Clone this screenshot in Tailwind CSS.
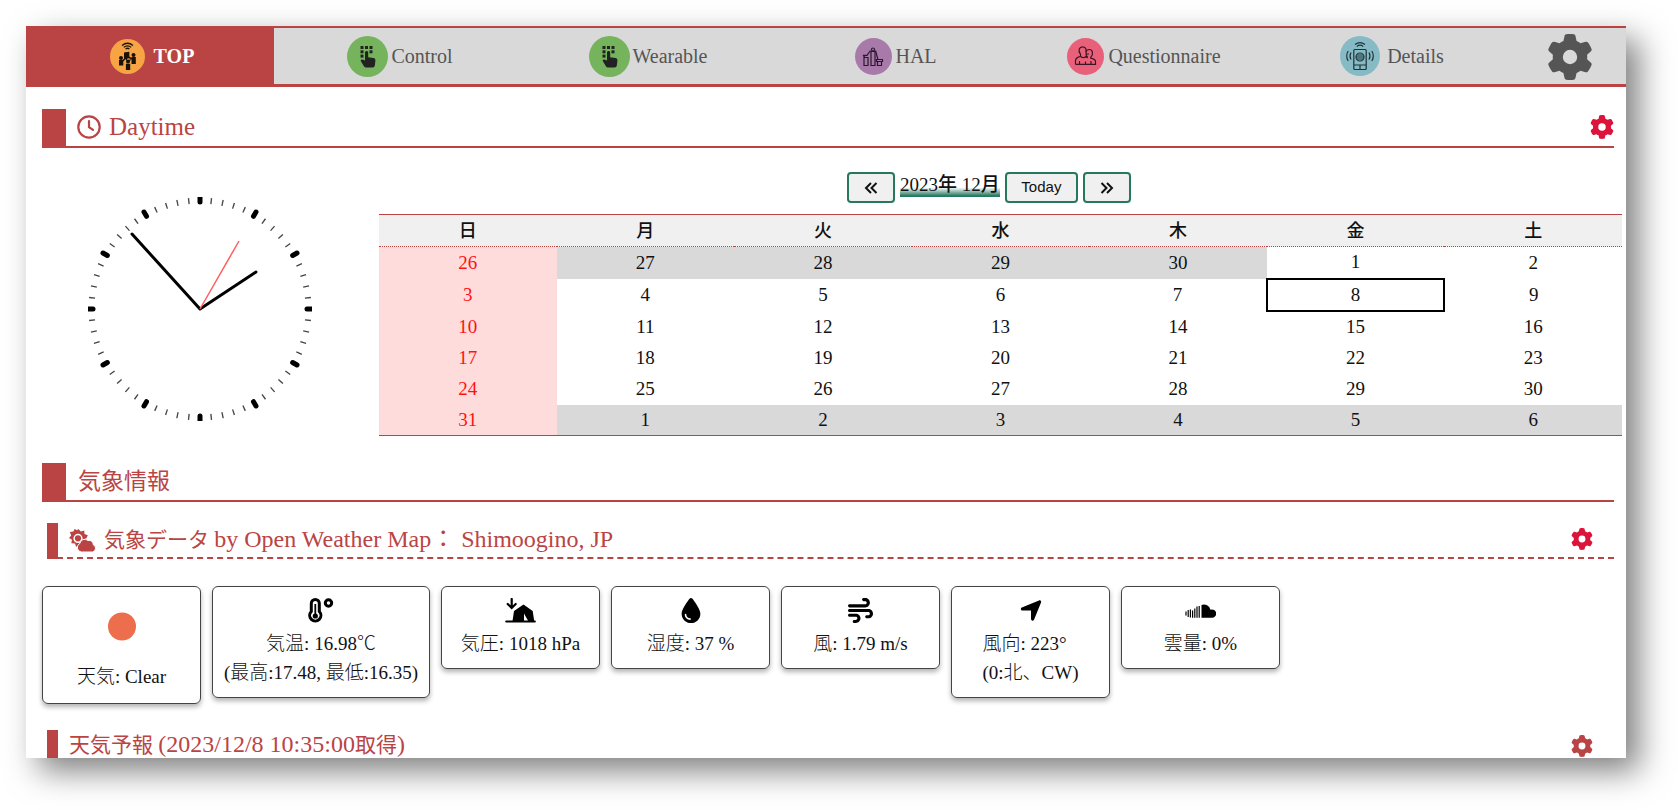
<!DOCTYPE html>
<html lang="ja">
<head>
<meta charset="utf-8">
<meta name="viewport" content="width=device-width, initial-scale=1">
<title>TOP</title>
<script src="https://cdn.jsdelivr.net/npm/@tailwindcss/browser@4"></script>
</head>
<body class="bg-white h-screen overflow-hidden flex pt-[26px] pl-[26px] pr-[52px] pb-[52px] font-['Liberation_Serif','Noto_Sans_CJK_JP',serif] font-light text-[19px] text-[#111]">

<svg class="hidden" aria-hidden="true">
  <symbol id="gear" viewBox="0 0 512 512"><path d="M495.9 166.6c3.2 8.7 .5 18.4-6.4 24.6l-43.3 39.4c1.1 8.3 1.7 16.8 1.7 25.4s-.6 17.1-1.7 25.4l43.3 39.4c6.9 6.2 9.6 15.9 6.4 24.6c-4.4 11.9-9.7 23.3-15.8 34.3l-4.7 8.1c-6.6 11-14 21.4-22.1 31.2c-5.9 7.2-15.7 9.6-24.5 6.8l-55.7-17.7c-13.4 10.3-28.2 18.9-44 25.4l-12.5 57.1c-2 9.1-9 16.3-18.2 17.8c-13.8 2.3-28 3.5-42.5 3.5s-28.7-1.2-42.5-3.5c-9.2-1.5-16.2-8.7-18.2-17.8l-12.5-57.1c-15.8-6.5-30.6-15.1-44-25.4L83.1 425.9c-8.8 2.8-18.6 .3-24.5-6.8c-8.1-9.8-15.5-20.2-22.1-31.2l-4.7-8.1c-6.1-11-11.4-22.4-15.8-34.3c-3.2-8.7-.5-18.4 6.400-24.600l43.300-39.400C64.600 273.100 64 264.600 64 256s.6-17.100 1.700-25.400L22.400 191.200c-6.900-6.200-9.600-15.900-6.400-24.600c4.400-11.900 9.700-23.300 15.800-34.300l4.700-8.100c6.600-11 14-21.400 22.100-31.200c5.900-7.200 15.700-9.600 24.500-6.800l55.700 17.700c13.400-10.300 28.200-18.900 44-25.400l12.500-57.100c2-9.100 9-16.300 18.200-17.800C227.300 1.200 241.500 0 256 0s28.700 1.200 42.500 3.500c9.200 1.500 16.200 8.700 18.200 17.800l12.500 57.100c15.800 6.500 30.600 15.100 44 25.400l55.700-17.700c8.800-2.800 18.600-.3 24.500 6.800c8.100 9.800 15.500 20.200 22.100 31.200l4.700 8.100c6.100 11 11.400 22.400 15.800 34.300zM256 336a80 80 0 1 0 0-160 80 80 0 1 0 0 160z"/></symbol>
  <symbol id="keypad" viewBox="0 0 41 41">
    <circle cx="20.500" cy="20.500" r="20.500" fill="#75b45c"/>
    <g fill="#222"><rect x="13.500" y="10" width="3" height="3"/><rect x="18" y="10" width="3" height="3"/><rect x="22.500" y="10" width="3" height="3"/><rect x="13.500" y="14.300" width="3" height="3"/><rect x="22.500" y="14.300" width="3" height="3"/><rect x="13.500" y="18.600" width="3" height="3"/>
    <path d="M18 16.500c0-2 3.200-2 3.200 0v4.700l5.200.9c1.500.3 2 1 2 2.400l-.5 4.500c-.2 1.700-1 2.500-2.500 2.500h-6c-1 0-1.800-.4-2.500-1.300l-3-5c-.6-1 .4-1.900 1.500-1.600l2.600 1z"/></g>
  </symbol>
  <symbol id="major" viewBox="0 0 224 224" overflow="visible"><path d="M112 0V5" stroke="#000" stroke-width="5" stroke-linecap="round"/></symbol>
</svg>

<div class="flex-1 min-w-0 overflow-hidden bg-white shadow-[13px_13px_30px_rgba(0,0,0,0.5)]">

  <nav class="flex h-[61px] border-t-2 border-b-3 border-[#ba4444] bg-[#d9d9d9] text-[20px] text-[#555]">
    <div class="grid flex-1 grid-cols-6">
      <a href="#top" class="flex items-center justify-center gap-[9px] bg-[#ba4444] pl-1 font-bold text-white">
        <svg class="size-[35px]" viewBox="0 0 35 35" aria-hidden="true">
          <circle cx="17.500" cy="17.500" r="17.500" fill="#f6a444"/>
          <g fill="none" stroke="#1a1208" stroke-width="1.300"><path d="M12 6.500q5.500-4.500 11 0M13.800 8.300q3.700-3 7.400 0M15.600 10q1.900-1.500 3.800 0"/></g>
          <g fill="#1a1208"><circle cx="11" cy="19" r="2"/><path d="M9 21h4.300v5.500H9z"/><circle cx="23.500" cy="16" r="2"/><path d="M21.500 18h4.300v7h-4.300z"/><circle cx="18" cy="22.500" r="2"/><path d="M15.900 24.800h4.300V31h-4.300zM14 13.500l5.300-.8v6.500l-2 .3-.6 2.400-1.200-2.200h-1.500z"/><path d="M12.500 21l3-2.500.8 1-3 3zM19 17.500l3 1.500v1.500l-3-1.300zM21 20.500l-2 3-.7-.8 1.700-2.700z"/></g>
        </svg>TOP</a>
      <a href="#control" class="flex items-center justify-center gap-[3px] pl-1"><svg class="size-[41px]" aria-hidden="true"><use href="#keypad"/></svg>Control</a>
      <a href="#wearable" class="flex items-center justify-center gap-[3px] pl-1"><svg class="size-[41px]" aria-hidden="true"><use href="#keypad"/></svg>Wearable</a>
      <a href="#hal" class="flex items-center justify-center gap-[3px] pl-1">
        <svg class="size-[37px]" viewBox="0 0 37 37" aria-hidden="true">
          <circle cx="18.500" cy="18.500" r="18.500" fill="#a87aaa"/>
          <g fill="none" stroke="#2c1830" stroke-width="1.200"><path d="M9 19.500h4v8H9zM16 13.500h4v14h-4zM22.500 23.500h4v4h-4zM21.500 21.500h6v2h-6z"/><circle cx="18" cy="11.500" r="1.500"/><path d="M8 17.300l2 2M8 17.300h4l3.500-4.800M20.500 12.500l2.300 8.500"/></g>
        </svg>HAL</a>
      <a href="#questionnaire" class="flex items-center justify-center gap-1 pl-1">
        <svg class="size-[37px]" viewBox="0 0 37 37" aria-hidden="true">
          <circle cx="18.500" cy="18.500" r="18.500" fill="#e8607a"/>
          <g fill="none" stroke="#3a1520" stroke-width="1.200"><path d="M8.500 26.300v-3.500c0-3 2-3.500 5-4.500v-2c-3-4-1-7.500 2-7.500s4.200 2.500 3.400 5.200"/><path d="M20.700 19.500c-3-3.500-2-8 1.500-8s4.500 4.500 1.600 7.700v1c3 .6 4.700 1.400 4.700 3.500v2.600h-20M13.500 18.500c2 1.500 4 1.500 5.500 0l1.700 1.500M12.500 23v3M18.500 23.500v3M24 23v3M18.500 16h3.500"/></g>
        </svg>Questionnaire</a>
      <a href="#details" class="flex items-center justify-center gap-[7px] pl-1">
        <svg class="size-10" viewBox="0 0 40 40" aria-hidden="true">
          <circle cx="20" cy="20" r="20" fill="#86bbc6"/>
          <g fill="none" stroke="#1f3238" stroke-width="1.200"><rect x="13.800" y="13.500" width="12.400" height="20" rx="1"/><path d="M13.800 29h12.400M20 29v4M15 8.500q5-3.800 10 0M16.800 10.400q3.200-2.400 6.400 0M8.200 15q-3 5 0 10M11 16.500q-2 3.500 0 7M31.800 15q3 5 0 10M29 16.500q2 3.500 0 7"/><circle cx="20" cy="21" r="4"/><path d="M16 21h8M17 19h6M17 23h6"/></g>
        </svg>Details</a>
    </div>
    <div class="flex w-28 items-center justify-center pt-[2px]">
      <button type="button" aria-label="設定"><svg class="block size-[46px] fill-[#555]"><use href="#gear"/></svg></button>
    </div>
  </nav>

  <main class="pl-4 pt-[22px]">
    <h2 class="mr-3 flex h-[39px] items-center border-b-2 border-[#ba4444] text-[25px] leading-[35px] font-normal text-[#ba4444]">
      <span class="mr-[11px] w-6 self-stretch bg-[#ba4444]"></span>
      <svg class="mr-2 mb-[2px] size-6" viewBox="0 0 24 24" fill="none" stroke="#ba4444" stroke-width="2.200" stroke-linecap="round" aria-hidden="true"><circle cx="12" cy="12" r="10.700"/><path d="M12 6v6.200l4 2.600"/></svg>
      <span class="mb-[2px]">Daytime</span>
      <button type="button" class="mb-[2px] ml-auto" aria-label="時計の設定"><svg class="block size-6 fill-[#dc143c]"><use href="#gear"/></svg></button>
    </h2>

    <section class="flex h-[315px] pt-6">
      <div class="w-[337px] pl-[46px] pt-[25px]">
        <svg class="block size-56" viewBox="0 0 224 224" role="img" aria-label="時計">
          <circle cx="112" cy="112" r="108.500" fill="none" stroke="#444" stroke-width="6" pathLength="360" stroke-dasharray="0.700 5.300" stroke-dashoffset="0.350"/>
          <use href="#major"/>
          <use href="#major" transform="rotate(30 112 112)"/>
          <use href="#major" transform="rotate(60 112 112)"/>
          <use href="#major" transform="rotate(90 112 112)"/>
          <use href="#major" transform="rotate(120 112 112)"/>
          <use href="#major" transform="rotate(150 112 112)"/>
          <use href="#major" transform="rotate(180 112 112)"/>
          <use href="#major" transform="rotate(210 112 112)"/>
          <use href="#major" transform="rotate(240 112 112)"/>
          <use href="#major" transform="rotate(270 112 112)"/>
          <use href="#major" transform="rotate(300 112 112)"/>
          <use href="#major" transform="rotate(330 112 112)"/>
          <path d="M112 112L168 75M112 112L44 37" stroke="#000" stroke-width="3" stroke-linecap="round"/>
          <path d="M112 112L151 44" stroke="#ff5f5f" stroke-width="1.500"/>
        </svg>
      </div>

      <div class="mr-1 min-w-0 flex-1">
        <div class="flex items-start justify-center gap-[5px] pr-[23px]">
          <button type="button" aria-label="前の月" class="flex h-[31px] w-12 items-center justify-center rounded border-2 border-[#26795f] bg-[#f0f0f0]"><svg class="size-4" viewBox="0 0 16 16" fill="none" stroke="#111" stroke-width="2"><path d="M8 3L3 8l5 5M13.500 3l-5 5 5 5"/></svg></button>
          <span class="mt-[1px] h-6 bg-linear-to-b from-transparent from-60% to-[#26795f] to-95% text-[19px] leading-6 font-medium">2023年 12月</span>
          <button type="button" class="h-[31px] w-[73px] rounded border-2 border-[#26795f] bg-[#f0f0f0] font-['Liberation_Sans',sans-serif] text-[15px] font-normal">Today</button>
          <button type="button" aria-label="次の月" class="flex h-[31px] w-12 items-center justify-center rounded border-2 border-[#26795f] bg-[#f0f0f0]"><svg class="size-4" viewBox="0 0 16 16" fill="none" stroke="#111" stroke-width="2"><path d="M8 3l5 5-5 5M2.500 3l5 5-5 5"/></svg></button>
        </div>
        <table class="mt-[11px] w-full table-fixed border-collapse border-y border-[#ba4444] text-center leading-5">
          <thead>
            <tr class="h-8 border-b border-dotted border-[#ba4444] bg-[#f0f0f0] text-[18px]"><th class="font-medium">日</th><th class="font-medium">月</th><th class="font-medium">火</th><th class="font-medium">水</th><th class="font-medium">木</th><th class="font-medium">金</th><th class="font-medium">土</th></tr>
          </thead>
          <tbody>
            <tr class="h-8"><td class="bg-[#ffdcdc] text-[#f11]">26</td><td class="bg-[#d9d9d9]">27</td><td class="bg-[#d9d9d9]">28</td><td class="bg-[#d9d9d9]">29</td><td class="bg-[#d9d9d9]">30</td><td>1</td><td>2</td></tr>
            <tr class="h-8"><td class="bg-[#ffdcdc] text-[#f11]">3</td><td>4</td><td>5</td><td>6</td><td>7</td><td class="border-2 border-black">8</td><td>9</td></tr>
            <tr class="h-8"><td class="bg-[#ffdcdc] text-[#f11]">10</td><td>11</td><td>12</td><td>13</td><td>14</td><td>15</td><td>16</td></tr>
            <tr class="h-[31px]"><td class="bg-[#ffdcdc] text-[#f11]">17</td><td>18</td><td>19</td><td>20</td><td>21</td><td>22</td><td>23</td></tr>
            <tr class="h-[31px]"><td class="bg-[#ffdcdc] text-[#f11]">24</td><td>25</td><td>26</td><td>27</td><td>28</td><td>29</td><td>30</td></tr>
            <tr class="h-[31px]"><td class="bg-[#ffdcdc] text-[#f11]">31</td><td class="bg-[#d9d9d9]">1</td><td class="bg-[#d9d9d9]">2</td><td class="bg-[#d9d9d9]">3</td><td class="bg-[#d9d9d9]">4</td><td class="bg-[#d9d9d9]">5</td><td class="bg-[#d9d9d9]">6</td></tr>
          </tbody>
        </table>
      </div>
    </section>

    <h2 class="mr-3 flex h-[39px] items-center border-b-2 border-[#ba4444] text-[23px] leading-[35px] font-normal text-[#ba4444]">
      <span class="mr-3 w-6 self-stretch bg-[#ba4444]"></span>気象情報
    </h2>

    <h3 class="mr-3 ml-[5px] mt-[21px] flex h-9 items-center border-b-2 border-dashed border-[#ba4444] text-[21px] leading-7 font-normal text-[#ba4444]">
      <span class="-mb-[2px] mr-[11px] w-[11px] self-stretch bg-[#ba4444]"></span>
      <svg class="mr-[7px] h-[23px] w-7" viewBox="0 0 28 23" aria-hidden="true">
        <path fill="#ba4444" fill-rule="evenodd" d="M9.500 0l2.300 2.600 3.400-1 .3 3.500 3.300 1.200-1.500 3.200q-3 .3-4 3.400-3.300.8-4.300 4l-2 .8-1-3.200-3.700-.2.700-3.500L0 9l2.200-2.600L.8 3l3.600-.6L5.700-.1 8 1.300zM9 4.800a4.600 4.600 0 1 0 0 9.200 4.600 4.600 0 0 0 0-9.200z"/>
        <circle cx="9" cy="9.300" r="3.100" fill="#ba4444"/>
        <path fill="#ba4444" stroke="#fff" stroke-width="1" d="M12.300 23a4.500 4.500 0 0 1-1.500-8.500 5 5 0 0 1 8.200-3 4.200 4.200 0 0 1 5.300 4.300A3.800 3.800 0 0 1 23.500 23z"/>
      </svg>
      <span class="mb-[2px]">気象データ <span class="text-[24px]">by Open Weather Map： Shimoogino, JP</span></span>
      <button type="button" class="mb-[2px] ml-auto mr-[21px]" aria-label="気象データの設定"><svg class="block size-[22px] fill-[#dc143c]"><use href="#gear"/></svg></button>
    </h3>

    <div class="mt-[27px] flex items-start gap-[11px] pb-[26px] text-center leading-[29px] whitespace-nowrap">
      <div class="flex w-[159px] flex-col items-center rounded-md border border-[#444] pt-[15px] pb-3 shadow-[0_3px_5px_rgba(0,0,0,0.3)]">
        <svg class="mb-[9px] h-[51px] w-[50px]" viewBox="0 0 50 50" aria-hidden="true"><circle cx="25" cy="24" r="14" fill="#ec6e4c"/></svg>
        天気: Clear
      </div>
      <div class="flex w-[218px] flex-col items-center rounded-md border border-[#444] pt-[11px] pb-[10px] shadow-[0_3px_5px_rgba(0,0,0,0.3)]">
        <svg class="mb-[6px] h-[25px] w-[26px]" viewBox="0 0 26 25" fill="none" stroke="#000" aria-hidden="true"><path stroke-width="3" d="M3.300 13.500V5.500a4 4 0 0 1 8 0v8a5.600 5.600 0 1 1-8 0z"/><circle cx="7.300" cy="18" r="2.600" fill="#000" stroke="none"/><path d="M7.300 6v11" stroke-width="1.800"/><circle cx="20.500" cy="5" r="3.200" stroke-width="3"/></svg>
        <span>気温: 16.98℃<br>(最高:17.48, 最低:16.35)</span>
      </div>
      <div class="flex w-[159px] flex-col items-center rounded-md border border-[#444] pt-[11px] pb-[10px] shadow-[0_3px_5px_rgba(0,0,0,0.3)]">
        <svg class="mb-[6px] h-[25px] w-[31px]" viewBox="0 0 31 25" aria-hidden="true"><path d="M6.700 1v8.500M2.700 6l4 4 4-4M1.300 23.500h28.500" fill="none" stroke="#000" stroke-width="2.200" stroke-linecap="round"/><path d="M7.500 23l1.500-10L18.500 6.500l9.200 6.500 1.500 10h-6L19 15.500V23z"/></svg>
        気圧: 1018 hPa
      </div>
      <div class="flex w-[159px] flex-col items-center rounded-md border border-[#444] pt-[11px] pb-[10px] shadow-[0_3px_5px_rgba(0,0,0,0.3)]">
        <svg class="mb-[6px] h-[25px] w-5" viewBox="0 0 384 512" aria-hidden="true"><path d="M192 512C86 512 0 426 0 320C0 228.800 130.200 57.700 166.600 11.700C172.600 4.200 181.500 0 191.100 0h1.800c9.600 0 18.500 4.200 24.500 11.700C253.800 57.700 384 228.800 384 320c0 106-86 192-192 192zM96 336c0-8.800-7.200-16-16-16s-16 7.200-16 16c0 61.900 50.100 112 112 112c8.800 0 16-7.200 16-16s-7.200-16-16-16c-44.200 0-80-35.800-80-80z"/></svg>
        湿度: 37 %
      </div>
      <div class="flex w-[159px] flex-col items-center rounded-md border border-[#444] pt-[11px] pb-[10px] shadow-[0_3px_5px_rgba(0,0,0,0.3)]">
        <svg class="mb-[6px] size-[25px]" viewBox="0 0 512 512" aria-hidden="true"><path d="M288 32c0 17.700 14.300 32 32 32h32c17.700 0 32 14.300 32 32s-14.300 32-32 32H32c-17.700 0-32 14.300-32 32s14.300 32 32 32H352c53 0 96-43 96-96s-43-96-96-96H320c-17.700 0-32 14.300-32 32zm64 352c0 17.700 14.300 32 32 32h32c53 0 96-43 96-96s-43-96-96-96H32c-17.700 0-32 14.300-32 32s14.300 32 32 32H416c17.700 0 32 14.300 32 32s-14.300 32-32 32H384c-17.700 0-32 14.300-32 32zM128 512h32c53 0 96-43 96-96s-43-96-96-96H32c-17.700 0-32 14.300-32 32s14.300 32 32 32H160c17.700 0 32 14.300 32 32s-14.300 32-32 32H128c-17.700 0-32 14.300-32 32s14.300 32 32 32z"/></svg>
        風: 1.79 m/s
      </div>
      <div class="flex w-[159px] flex-col items-center rounded-md border border-[#444] pt-[11px] pb-[10px] shadow-[0_3px_5px_rgba(0,0,0,0.3)]">
        <svg class="mb-[6px] h-[25px] w-[22px]" viewBox="0 0 448 512" aria-hidden="true"><path d="M429.600 92.100c4.900-11.900 2.100-25.600-7-34.700s-22.800-11.900-34.700-7l-352 144c-14.200 5.800-22.200 20.800-19.300 35.800s16.100 25.800 31.400 25.800H224V432c0 15.300 10.800 28.400 25.800 31.400s30-5.100 35.800-19.300l144-352z"/></svg>
        <span class="text-left">風向: 223°<br>(0:北、CW)</span>
      </div>
      <div class="flex w-[159px] flex-col items-center rounded-md border border-[#444] pt-[11px] pb-[10px] shadow-[0_3px_5px_rgba(0,0,0,0.3)]">
        <svg class="mb-[6px] h-[25px] w-[31px]" viewBox="0 0 31 25" aria-hidden="true"><path d="M16.500 7a6.800 6.800 0 0 1 9 4.700 4.200 4.200 0 1 1 1 8.100h-10z"/><path d="M1 13.500v4M3.200 12v7M5.400 11.500v8M7.600 12.500v7.300M9.800 10.500v9.300M12 8.500v11.300M14.200 8v11.800" stroke="#000" stroke-width="1.200"/></svg>
        雲量: 0%
      </div>
    </div>

    <h3 class="mr-3 ml-[5px] flex h-9 items-start border-b-2 border-dashed border-[#ba4444] text-[21px] leading-7 font-normal text-[#ba4444]">
      <span class="-mb-[2px] mr-[11px] w-[11px] self-stretch bg-[#ba4444]"></span>
      <span>天気予報 <span class="text-[24px]">(2023/12/8 10:35:00</span>取得<span class="text-[24px]">)</span></span>
      <button type="button" class="ml-auto mr-[21px] pt-[5px]" aria-label="天気予報の設定"><svg class="block size-[22px] fill-[#ba4444]"><use href="#gear"/></svg></button>
    </h3>
  </main>
</div>
</body>
</html>
